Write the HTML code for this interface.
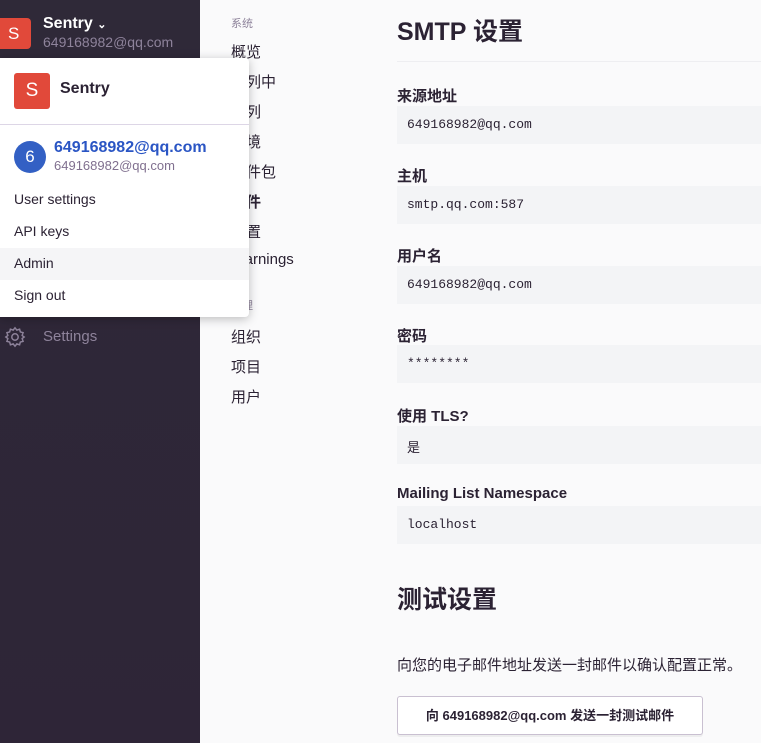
<!DOCTYPE html><html><head><meta charset="utf-8"><style>
*{margin:0;padding:0;box-sizing:border-box}
body{width:761px;height:743px;overflow:hidden;background:#fafafb;font-family:"Liberation Sans","Noto Sans CJK SC",sans-serif;position:relative;color:#2b2233}
.sb{position:absolute;left:0;top:0;width:200px;height:743px;background:linear-gradient(#2f2938,#2e2537)}
.a{position:absolute}
.nav{position:absolute;left:231px;font-size:15px;color:#2b2233}
.lbl{position:absolute;left:397px;font-size:15px;font-weight:bold;color:#2b2233}
.fld{position:absolute;left:397px;width:364px;height:38px;background:#f3f4f6;font-family:"Liberation Mono","Noto Sans CJK SC",monospace;font-size:13px;color:#2b2233;padding:11px 0 0 10px}
</style></head><body>
<div class="sb"></div>
<div class="a" style="left:0;top:18px;width:31px;height:31px;background:#e1493a;border-radius:0 4px 4px 0;color:#fff;font-size:17px;line-height:31px;padding-left:8px">S</div>
<div class="a" style="left:43px;top:15px;color:#fff;font-weight:bold;font-size:16px">Sentry <span style="font-size:11px">⌄</span></div>
<div class="a" style="left:43px;top:34px;color:#8e839b;font-size:14px">649168982@qq.com</div>
<svg class="a" style="left:4px;top:326px" width="22" height="22" viewBox="0 0 24 24" fill="none" stroke="#8e839b" stroke-width="1.6"><circle cx="12" cy="12" r="3.5"/><path d="M12 2l2 2.5 3-1 .8 3 3 .8-1 3L22 12l-2.2 1.7 1 3-3 .8-.8 3-3-1L12 22l-2-2.5-3 1-.8-3-3-.8 1-3L2 12l2.2-1.7-1-3 3-.8.8-3 3 1z"/></svg>
<div class="a" style="left:43px;top:328px;color:#8e839b;font-size:15px">Settings</div>

<div class="a" style="left:231px;top:15px;font-size:11px;color:#8e839b">系统</div>
<div class="nav" style="top:41px">概览</div>
<div class="nav" style="top:71px">队列中</div>
<div class="nav" style="top:101px">队列</div>
<div class="nav" style="top:131px">环境</div>
<div class="nav" style="top:161px">软件包</div>
<div class="nav" style="top:191px;font-weight:bold">邮件</div>
<div class="nav" style="top:221px">配置</div>
<div class="nav" style="top:251px">Warnings</div>
<div class="a" style="left:231px;top:297px;font-size:11px;color:#8e839b">管理</div>
<div class="nav" style="top:326px">组织</div>
<div class="nav" style="top:356px">项目</div>
<div class="nav" style="top:386px">用户</div>

<div class="a" style="left:0;top:58px;width:249px;height:259px;background:#fff;border-radius:0 4px 4px 0;box-shadow:0 2px 10px rgba(0,0,0,.25)">
 <div class="a" style="left:14px;top:15px;width:36px;height:36px;background:#e1493a;border-radius:3px;color:#fff;font-size:19px;line-height:36px;text-align:center">S</div>
 <div class="a" style="left:60px;top:22px;font-weight:bold;font-size:16px;color:#2b2233">Sentry</div>
 <div class="a" style="left:0;top:66px;width:249px;height:1px;background:#ddd6e6"></div>
 <div class="a" style="left:14px;top:83px;width:32px;height:32px;border-radius:50%;background:#3360c4;color:#fff;font-size:17px;line-height:32px;text-align:center">6</div>
 <div class="a" style="left:54px;top:81px;font-weight:bold;font-size:16px;color:#2a55c4">649168982@qq.com</div>
 <div class="a" style="left:54px;top:100px;font-size:13px;color:#80708f">649168982@qq.com</div>
 <div class="a" style="left:14px;top:133px;font-size:14px">User settings</div>
 <div class="a" style="left:14px;top:165px;font-size:14px">API keys</div>
 <div class="a" style="left:0;top:190px;width:249px;height:32px;background:#f5f5f7"></div>
 <div class="a" style="left:14px;top:197px;font-size:14px">Admin</div>
 <div class="a" style="left:14px;top:229px;font-size:14px">Sign out</div>
</div>

<div class="a" style="left:397px;top:12px;font-size:25px;font-weight:bold">SMTP 设置</div>
<div class="a" style="left:397px;top:61px;width:364px;height:1px;background:#eeeef1"></div>
<div class="lbl" style="top:85px">来源地址</div><div class="fld" style="top:106px">649168982@qq.com</div>
<div class="lbl" style="top:165px">主机</div><div class="fld" style="top:186px">smtp.qq.com:587</div>
<div class="lbl" style="top:245px">用户名</div><div class="fld" style="top:266px">649168982@qq.com</div>
<div class="lbl" style="top:325px">密码</div><div class="fld" style="top:345px">********</div>
<div class="lbl" style="top:405px">使用 TLS?</div><div class="fld" style="top:426px">是</div>
<div class="lbl" style="top:485px">Mailing List Namespace</div><div class="fld" style="top:506px">localhost</div>
<div class="a" style="left:397px;top:580px;font-size:25px;font-weight:bold">测试设置</div>
<div class="a" style="left:397px;top:654px;font-size:15px;white-space:nowrap">向您的电子邮件地址发送一封邮件以确认配置正常。</div>
<div class="a" style="left:397px;top:696px;width:306px;height:39px;background:#fff;border:1px solid #c9c0d1;border-radius:3px;box-shadow:0 2px 0 rgba(0,0,0,.05);font-size:13px;font-weight:bold;text-align:center;line-height:37px">向 649168982@qq.com 发送一封测试邮件</div>
</body></html>
